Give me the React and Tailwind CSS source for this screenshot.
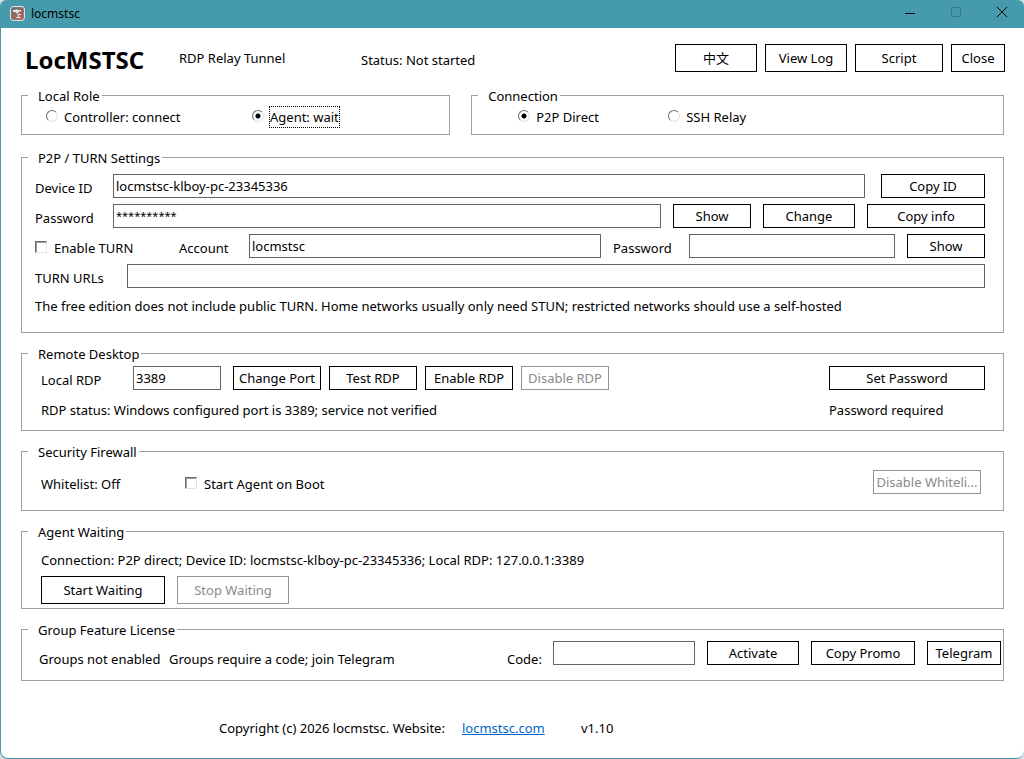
import React from "react";

const frame = "h-6 shrink-0 border bg-white text-center leading-5 whitespace-nowrap";

function Button({ className = "", disabled = false, children }) {
  const tone = disabled ? "border-[#949494] text-[#8a8a8a]" : "border-black text-black";
  return (
    <button type="button" disabled={disabled} className={`${frame} ${tone} ${className}`}>
      {children}
    </button>
  );
}

function Field({ className = "", ...props }) {
  return (
    <input
      type="text"
      className={`h-6 min-w-0 border border-[#646464] bg-white px-0.5 leading-5 text-black outline-none ${className}`}
      {...props}
    />
  );
}

function Group({ title, className = "", children }) {
  return (
    <fieldset className={`min-w-0 border border-[#a0a0a0] ${className}`}>
      <legend className="ml-1.5 pt-px pr-0.5 pl-2.5 leading-5">{title}</legend>
      {children}
    </fieldset>
  );
}

function Radio({ name, label, checked = false, focused = false, className = "" }) {
  return (
    <label className={`flex items-center gap-1.5 ${className}`}>
      <input
        type="radio"
        name={name}
        defaultChecked={checked}
        className="mb-0.5 size-3 shrink-0 appearance-none rounded-full border border-t-[#696969] border-r-[#e3e3e3] border-b-[#e3e3e3] border-l-[#696969] bg-white checked:bg-[radial-gradient(circle,#000_2px,#fff_3px)]"
      />
      <span
        className={
          focused
            ? "-ml-px border border-dotted border-black leading-5 whitespace-nowrap"
            : "border border-transparent -ml-px leading-5 whitespace-nowrap"
        }
      >
        {label}
      </span>
    </label>
  );
}

function Check({ label, className = "" }) {
  return (
    <label className={`flex items-center gap-[7px] pt-1 whitespace-nowrap ${className}`}>
      <input
        type="checkbox"
        className="mb-0.5 size-3 shrink-0 appearance-none border border-t-[#696969] border-r-[#e3e3e3] border-b-[#e3e3e3] border-l-[#696969] bg-white shadow-[inset_1px_1px_0_#a0a0a0] checked:bg-black"
      />
      <span>{label}</span>
    </label>
  );
}

function AppIcon() {
  return (
    <svg viewBox="0 0 16 16" className="size-4" aria-hidden="true">
      <defs>
        <linearGradient id="tile" x1="0" y1="0" x2="1" y2="1">
          <stop offset="0" stopColor="#55707a" />
          <stop offset="0.45" stopColor="#8f6a60" />
          <stop offset="1" stopColor="#b5604c" />
        </linearGradient>
      </defs>
      <rect x="0.6" y="0.6" width="13.8" height="13.8" rx="2.6" fill="url(#tile)" stroke="#e9f1f3" strokeWidth="1" />
      <path d="M3 4h2.4l1-1 1 1H11v1.6H8.6v1.2H6.4L5 6H3z" fill="#dfeaec" />
      <path d="M7 6.5l1.2 2v2.6M6.4 11.5h4.4M9 8.5h2" stroke="#f0f3f3" strokeWidth="1" fill="none" />
    </svg>
  );
}

export default function App() {
  return (
    <div className="min-h-screen bg-[#d9dfe1] font-['Noto_Sans','Noto_Sans_CJK_SC',sans-serif] text-[13px] leading-5 text-black">
      <div className="flex min-h-screen flex-col overflow-hidden rounded-t-md rounded-b-lg border-b border-l border-[#459aac] bg-white">
        <div className="-ml-px flex h-7 items-center bg-[#459aac] pl-2.5">
          <AppIcon />
          <span className="ml-[5px] flex-1 text-[12px] leading-5">locmstsc</span>
          <button type="button" aria-label="Minimize" className="flex h-7 w-[46px] items-center justify-center">
            <svg viewBox="0 0 10 10" className="size-2.5" shapeRendering="crispEdges">
              <path d="M0 4.5h10" stroke="#000" />
            </svg>
          </button>
          <button type="button" disabled aria-label="Maximize" className="flex h-7 w-[46px] items-center justify-center pb-1">
            <svg viewBox="0 0 10 10" className="size-2.5">
              <rect x="0.5" y="0.5" width="9" height="9" rx="1" fill="none" stroke="#357787" />
            </svg>
          </button>
          <button type="button" aria-label="Close window" className="flex h-7 w-[45px] items-center justify-center pb-1">
            <svg viewBox="0 0 10 10" className="size-2.5 overflow-visible">
              <path d="M0 0l10 10M10 0L0 10" stroke="#000" fill="none" />
            </svg>
          </button>
        </div>

        <header className="flex h-[57px] items-start pt-4 pr-[19px] pl-6">
          <h1 className="w-[154px] shrink-0 text-[24px] leading-8 font-bold">LocMSTSC</h1>
          <p className="w-[182px] shrink-0 pt-1">RDP Relay Tunnel</p>
          <p className="flex-1 pt-1.5">Status: Not started</p>
          <div className="flex gap-2">
            <Button className="h-7 w-[82px]">中文</Button>
            <Button className="h-7 w-[82px]">View Log</Button>
            <Button className="h-7 w-[88px]">Script</Button>
            <Button className="h-7 w-[54px]">Close</Button>
          </div>
        </header>

        <main className="flex flex-col gap-2.5 px-5">
          <div className="mb-0.5 flex gap-[21px]">
            <Group title="Local Role" className="flex-[429]">
              <div className="flex h-7 items-start pl-6">
                <Radio name="role" label="Controller: connect" className="w-[206px]" />
                <Radio name="role" label="Agent: wait" checked focused />
              </div>
            </Group>
            <Group title="Connection" className="flex-[533]">
              <div className="flex h-7 items-start pl-[46px]">
                <Radio name="connection" label="P2P Direct" checked className="w-[150px]" />
                <Radio name="connection" label="SSH Relay" />
              </div>
            </Group>
          </div>

          <Group title="P2P / TURN Settings">
            <div className="flex flex-col gap-1.5 pt-1.5 pr-[18px] pb-4 pl-[13px]">
              <div className="flex items-center">
                <label htmlFor="device" className="w-[78px] shrink-0 pt-1">Device ID</label>
                <Field id="device" defaultValue="locmstsc-klboy-pc-23345336" className="mr-4 flex-1" />
                <Button className="w-[104px]">Copy ID</Button>
              </div>
              <div className="flex h-6 items-center gap-3">
                <div className="flex min-w-0 flex-1 items-center">
                  <label htmlFor="password" className="w-[78px] shrink-0 pt-1">Password</label>
                  <Field id="password" defaultValue="**********" className="flex-1 pb-0.5 text-[11px]" />
                </div>
                <Button className="w-[78px]">Show</Button>
                <Button className="w-[92px]">Change</Button>
                <Button className="w-[118px]">Copy info</Button>
              </div>
              <div className="flex h-6 items-center">
                <Check label="Enable TURN" className="w-36 shrink-0" />
                <label htmlFor="account" className="w-[70px] shrink-0 pt-1">Account</label>
                <Field id="account" defaultValue="locmstsc" className="mr-3 flex-[346]" />
                <label htmlFor="turn-password" className="w-[76px] shrink-0 pt-1">Password</label>
                <Field id="turn-password" className="mr-3 flex-[200]" />
                <Button className="w-[78px]">Show</Button>
              </div>
              <div className="flex h-6 items-center">
                <label htmlFor="urls" className="w-[92px] shrink-0 pt-1">TURN URLs</label>
                <Field id="urls" className="flex-1" />
              </div>
              <p className="pt-0.5">
                The free edition does not include public TURN. Home networks usually only need STUN; restricted networks should use a self-hosted
              </p>
            </div>
          </Group>

          <Group title="Remote Desktop">
            <div className="flex flex-col gap-2.5 pt-0.5 pr-[18px] pb-2.5 pl-[19px]">
              <div className="flex h-6 items-center gap-2">
                <label htmlFor="port" className="w-[84px] shrink-0 pt-1">Local RDP</label>
                <Field id="port" defaultValue="3389" className="mr-1 w-[88px]" />
                <Button className="w-[88px]">Change Port</Button>
                <Button className="w-[88px]">Test RDP</Button>
                <Button className="w-[88px]">Enable RDP</Button>
                <Button className="w-[88px]" disabled>Disable RDP</Button>
                <Button className="ml-auto w-[156px]">Set Password</Button>
              </div>
              <div className="flex">
                <p className="flex-1">RDP status: Windows configured port is 3389; service not verified</p>
                <p className="w-[156px]">Password required</p>
              </div>
            </div>
          </Group>

          <Group title="Security Firewall">
            <div className="flex items-center pt-2 pr-[22px] pb-4 pl-[19px]">
              <p className="w-36 pt-1">Whitelist: Off</p>
              <Check label="Start Agent on Boot" />
              <Button className="ml-auto w-[108px]" disabled>Disable Whiteli...</Button>
            </div>
          </Group>

          <Group title="Agent Waiting">
            <div className="pt-2 pb-1 pl-[19px]">
              <p>Connection: P2P direct; Device ID: locmstsc-klboy-pc-23345336; Local RDP: 127.0.0.1:3389</p>
              <div className="mt-1.5 flex gap-3">
                <Button className="h-7 w-[124px]">Start Waiting</Button>
                <Button className="h-7 w-28" disabled>Stop Waiting</Button>
              </div>
            </div>
          </Group>

          <Group title="Group Feature License">
            <div className="flex h-10 items-start gap-3 pt-px pr-0.5 pl-[17px]">
              <p className="w-[118px] shrink-0 pt-2 whitespace-nowrap">Groups not enabled</p>
              <p className="flex-1 pt-2">Groups require a code; join Telegram</p>
              <div className="flex">
                <label htmlFor="code" className="w-[46px] pt-2">Code:</label>
                <Field id="code" className="w-[142px]" />
              </div>
              <Button className="w-[92px]">Activate</Button>
              <Button className="w-[104px]">Copy Promo</Button>
              <Button className="w-[74px]">Telegram</Button>
            </div>
          </Group>
        </main>

        <footer className="mt-[37px] flex pb-5 pl-[218px]">
          <p className="w-[243px]">Copyright (c) 2026 locmstsc. Website:</p>
          <div className="w-[119px]">
            <a href="#website" className="text-[#0066cc] underline">locmstsc.com</a>
          </div>
          <p>v1.10</p>
        </footer>
      </div>
    </div>
  );
}
